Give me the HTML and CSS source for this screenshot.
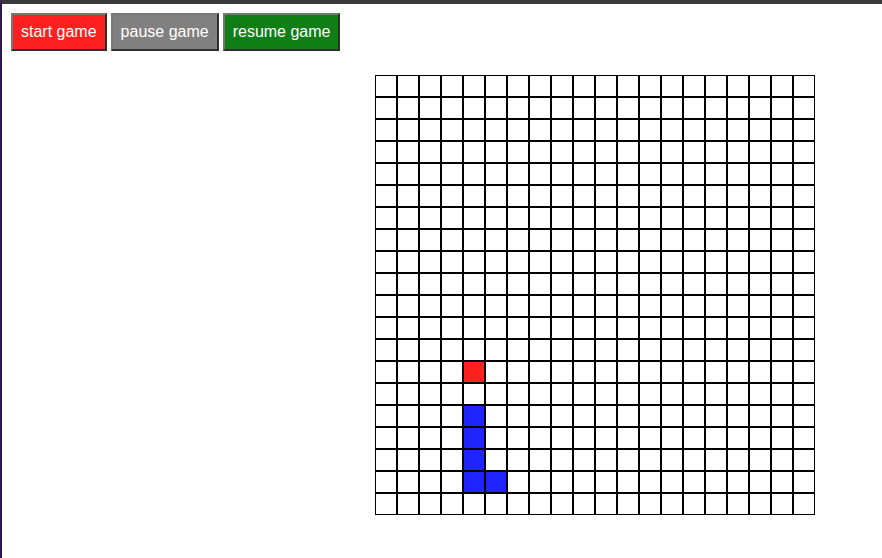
FILE: index.html
```html
<!DOCTYPE html>
<html>
<head>
<meta charset="utf-8">
<link rel="stylesheet" href="styles.css">
</head>
<body>
<div class="frame">
  <div class="controls">
    <button class="btn btn-start">start game</button>
    <button class="btn btn-pause">pause game</button>
    <button class="btn btn-resume">resume game</button>
  </div>
  <div class="board" id="board"></div>
</div>
<script>
  var board = document.getElementById('board');
  var snake = ['15,4', '16,4', '17,4', '18,4', '18,5'];
  var food = '13,4';
  for (var r = 0; r < 20; r++) {
    for (var c = 0; c < 20; c++) {
      var d = document.createElement('div');
      var k = r + ',' + c;
      d.className = 'cell' + (snake.indexOf(k) >= 0 ? ' snake' : '') + (k === food ? ' food' : '');
      board.appendChild(d);
    }
  }
</script>
</body>
</html>
```

FILE: styles.css
```css
html, body {
  margin: 0;
  padding: 0;
  background: #ffffff;
}

.frame {
  box-sizing: border-box;
  min-height: 100vh;
  border-top: 4px solid #39383d;
  border-left: 2px solid #2d1b4e;
  padding: 9px 0 0 9px;
  font-family: "Liberation Sans", Arial, sans-serif;
}

.controls {
  display: flex;
  gap: 4px;
}

.btn {
  font-family: "Liberation Sans", Arial, sans-serif;
  font-size: 16px;
  line-height: 18px;
  color: #ffffff;
  padding: 8px;
  margin: 0;
  border-width: 2px;
  border-style: solid;
  border-color: #767676 #2e2e2e #2e2e2e #767676;
  cursor: pointer;
}

.btn-start { background: #ff2020; }
.btn-pause { background: #808080; }
.btn-resume { background: #117d17; }

.board {
  display: grid;
  grid-template-columns: repeat(20, 22px);
  grid-auto-rows: 22px;
  width: 440px;
  margin: 24px 0 0 364px;
}

.cell {
  box-sizing: border-box;
  border: 1px solid #000000;
  background: #ffffff;
}

.cell.snake { background: #2024ff; }
.cell.food { background: #ff2020; }
```
